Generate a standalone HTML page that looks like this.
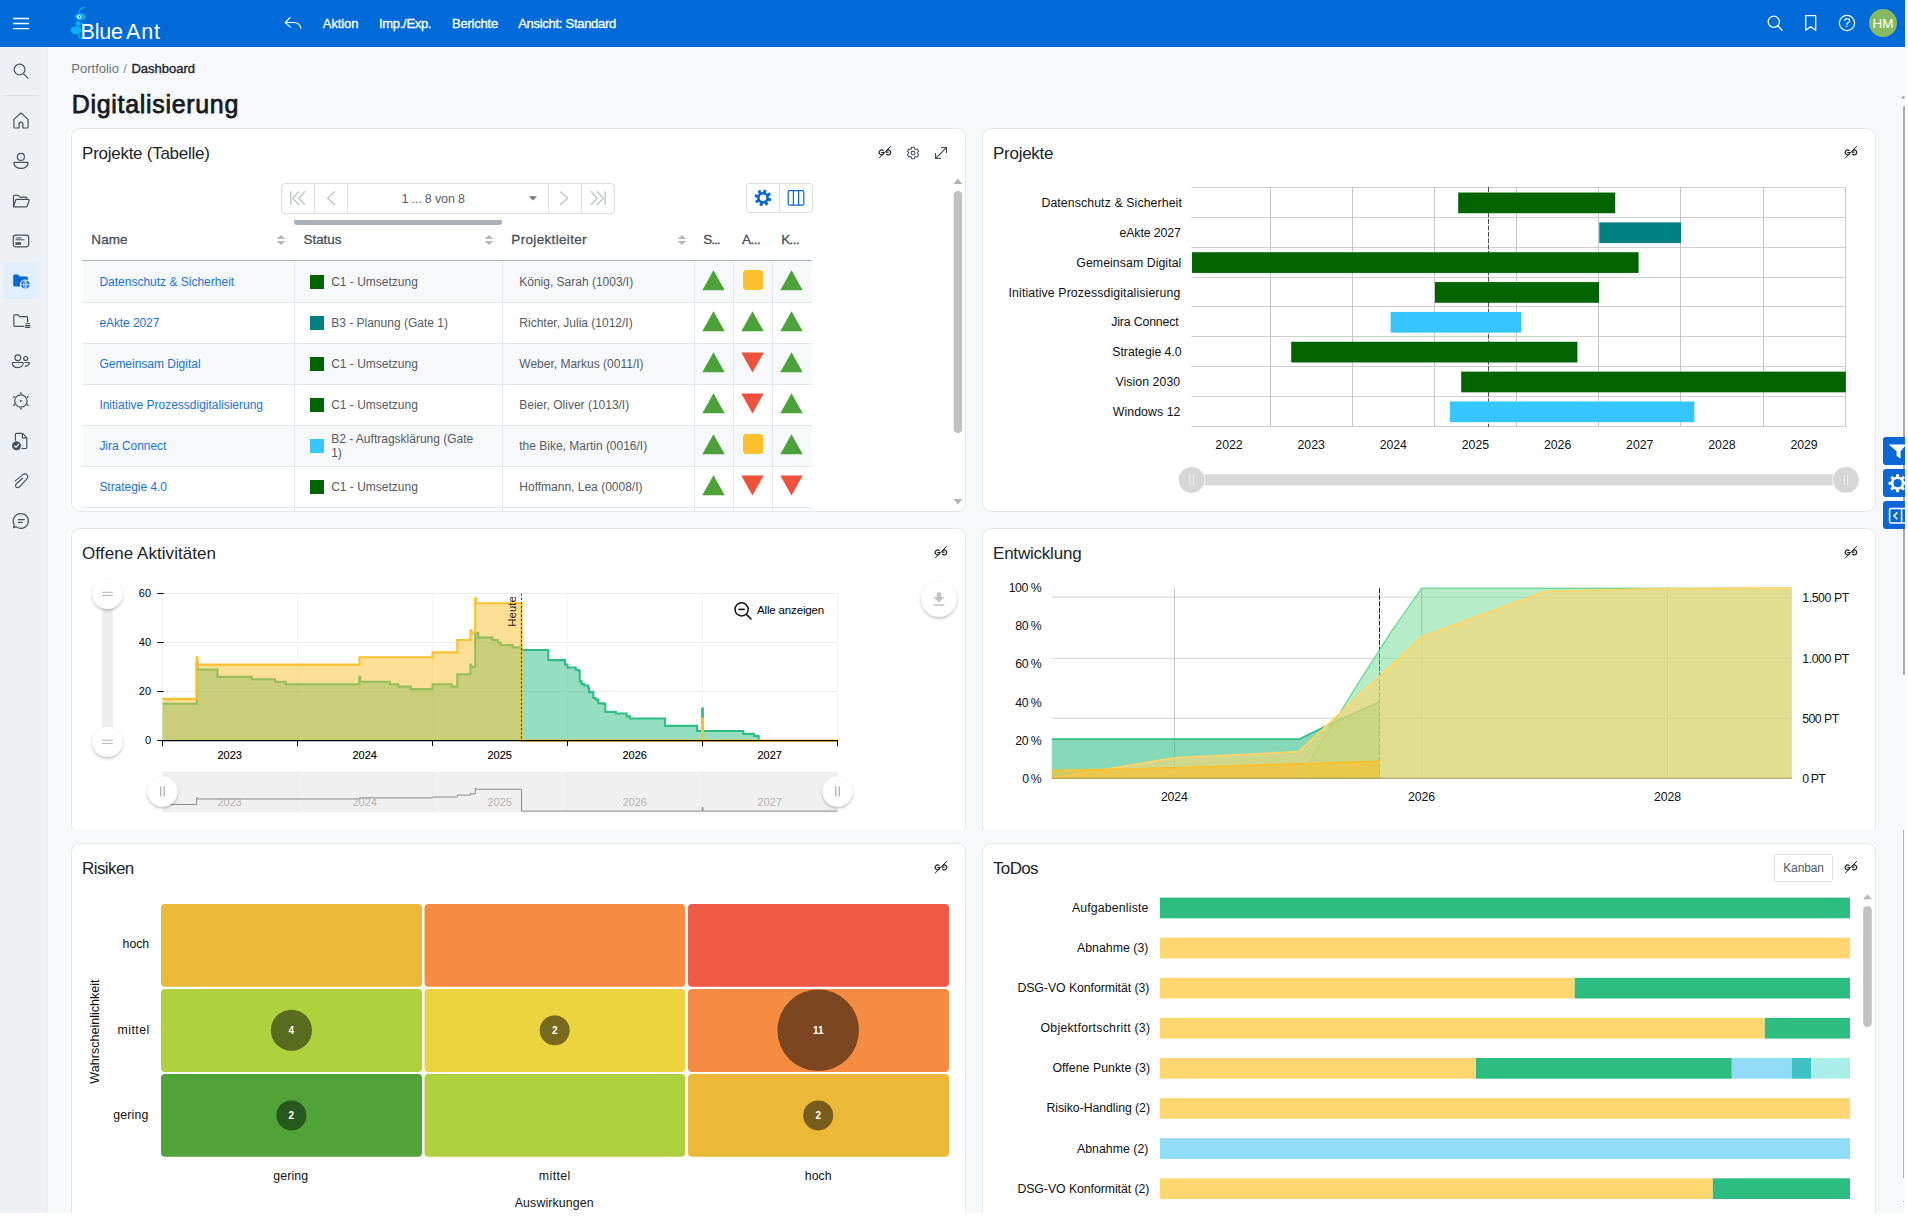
<!DOCTYPE html>
<html lang="de"><head><meta charset="utf-8"><title>Digitalisierung – Dashboard</title>
<style>
*{box-sizing:border-box}
html,body{margin:0;padding:0}
body{width:1908px;height:1216px;overflow:hidden;background:#fff;font-family:"Liberation Sans",sans-serif;color:#212529;position:relative}
#app{position:absolute;left:0;top:0;width:1905px;height:1213px;background:#f6f8fa;overflow:hidden}
.t{position:absolute;white-space:pre;display:block}
.abs{position:absolute}
header{position:absolute;left:0;top:0;width:1905px;height:47px;background:#006ad8}
nav.side{position:absolute;left:0;top:47px;width:48px;height:1166px;background:#eef1f3;border-right:1px solid #e9ecef}
.panel{position:absolute;background:#fff;border:1px solid #e3e7eb;border-radius:9px}
svg{position:absolute;overflow:visible}
.ico{fill:none;stroke:#495057;stroke-width:1.18;stroke-linecap:round;stroke-linejoin:round}
</style></head><body><div id="app">
<header><svg style="left:0;top:0" width="48" height="47"><g stroke="#fff" stroke-width="1.3" stroke-linecap="round"><path d="M13.5 18.5H28.5M13.5 23.5H28.5M13.5 28.7H28.5"/></g></svg><svg style="left:68px;top:4px" width="30" height="40" viewBox="0 0 30 40">
<path d="M11.2 8.2 C11.4 5.2 13.4 3.6 16.6 3.4" fill="none" stroke="#05b2f6" stroke-width="1.1" stroke-linecap="round"/>
<ellipse cx="12.1" cy="12.7" rx="5.3" ry="3.6" fill="#05b2f6"/>
<circle cx="11.2" cy="12.8" r="1.9" fill="#fff"/><circle cx="11.5" cy="12.9" r="0.85" fill="#0a63c9"/>
<circle cx="10.2" cy="19.6" r="2.5" fill="#05b2f6"/>
<ellipse cx="8" cy="26.2" rx="5.3" ry="4" fill="#05b2f6"/>
<path d="M10.4 30.4 C10.4 33.4 11.6 34 13.6 34 M13.6 19.8 L15.2 20" stroke="#05b2f6" stroke-width="1.3" stroke-linecap="round" fill="none"/>
</svg><span class="t" style="left:80.60px;top:22.00px;font-size:21.5px;line-height:21.5px;color:#fff;letter-spacing:-0.216px;">Blue</span><span class="t" style="left:126.00px;top:22.00px;font-size:21.5px;line-height:21.5px;color:#fff;letter-spacing:0.859px;">Ant</span><svg style="left:280px;top:12px" width="26" height="22"><path d="M6 10.5 H13 C18.5 10.5 20.5 13.5 20.8 16.5 M10.3 5.3 L5.3 10.5 L10.3 15.2" fill="none" stroke="#fff" stroke-width="1.1" stroke-linecap="round" stroke-linejoin="round"/></svg><span class="t" style="left:322.80px;top:17.00px;font-size:13px;line-height:13px;color:#fff;letter-spacing:-0.088px;-webkit-text-stroke:0.3px #fff;">Aktion</span><span class="t" style="left:379.00px;top:17.00px;font-size:13px;line-height:13px;color:#fff;letter-spacing:-0.303px;-webkit-text-stroke:0.3px #fff;">Imp./Exp.</span><span class="t" style="left:452.00px;top:17.00px;font-size:13px;line-height:13px;color:#fff;letter-spacing:-0.215px;-webkit-text-stroke:0.3px #fff;">Berichte</span><span class="t" style="left:518.20px;top:17.00px;font-size:13px;line-height:13px;color:#fff;letter-spacing:-0.283px;-webkit-text-stroke:0.3px #fff;">Ansicht: Standard</span><svg style="left:1764px;top:12px" width="24" height="24"><circle cx="9.8" cy="9.8" r="5.6" fill="none" stroke="#fff" stroke-width="1.3"/><path d="M14 14 L18 18.2" stroke="#fff" stroke-width="1.3" stroke-linecap="round"/></svg><svg style="left:1800px;top:12px" width="24" height="24"><path d="M5.7 3.7 H15.7 V18.3 L10.7 14.7 L5.7 18.3 Z" fill="none" stroke="#fff" stroke-width="1.3" stroke-linejoin="round"/></svg><svg style="left:1835px;top:11px" width="24" height="24"><circle cx="12" cy="12" r="7.6" fill="none" stroke="#fff" stroke-width="1.2"/></svg><span class="t" style="left:1843.52px;top:17.00px;font-size:12.5px;line-height:12.5px;color:#fff;">?</span><div class="abs" style="left:1869px;top:9px;width:28px;height:28px;border-radius:50%;background:#86b960"></div><span class="t" style="left:1872.50px;top:17.00px;font-size:13.5px;line-height:13.5px;color:#fff;">HM</span></header><div class="abs" style="left:48px;top:47px;width:1857px;height:1px;background:#fdfdfe"></div><nav class="side"><div class="abs" style="left:3px;top:48px;width:36px;height:1px;background:#dfe3e7"></div><div class="abs" style="left:3px;top:216px;width:36px;height:36px;border-radius:3px;background:#e1eefb"></div><svg style="left:9px;top:12px" width="24" height="24" viewBox="0 0 24 24" class="ico" ><circle cx="10.6" cy="10.6" r="5.4"/><path d="M14.6 14.8 L19 19.2"/></svg><svg style="left:9px;top:62px" width="24" height="24" viewBox="0 0 24 24" class="ico" ><path d="M4.9 10.4 L12 4 L19.1 10.4 V18 Q19.1 19 18.1 19 H13.9 V15.2 Q13.9 13.2 12 13.2 Q10.1 13.2 10.1 15.2 V19 H5.9 Q4.9 19 4.9 18 Z"/></svg><svg style="left:9px;top:102px" width="24" height="24" viewBox="0 0 24 24" class="ico" ><circle cx="11.9" cy="7.9" r="3.5"/><path d="M5.6 13.3 H18.4 Q19.2 13.3 19.1 14.1 Q18.3 19.4 12 19.4 Q5.7 19.4 4.9 14.1 Q4.8 13.3 5.6 13.3 Z"/></svg><svg style="left:9px;top:142px" width="24" height="24" viewBox="0 0 24 24" class="ico" ><path d="M4.5 17.8 V7.3 Q4.5 6.3 5.5 6.3 H9.2 L11 8.2 H16.8 Q17.8 8.2 17.8 9.2 V10.4 M4.5 17.8 L6.6 11.3 Q6.9 10.4 7.9 10.4 H19.3 Q20.5 10.4 20.1 11.5 L18.3 17 Q18 17.8 17 17.8 Z"/></svg><svg style="left:9px;top:182px" width="24" height="24" viewBox="0 0 24 24" class="ico" ><rect x="4.3" y="6.2" width="15.4" height="11.6" rx="2.2"/><path d="M7 9 H12 M7 10.8 H15" stroke-width="1"/><rect x="6.4" y="13.2" width="5.6" height="2.6" fill="#495057" stroke="none"/></svg><svg style="left:9px;top:222px" width="24" height="24" viewBox="0 0 24 24"><path d="M4.2 7 Q4.2 5.6 5.6 5.6 H9 L10.8 7.4 H17.4 Q18.8 7.4 18.8 8.8 V11.2 A5.3 5.3 0 0 0 11.2 17.6 H5.6 Q4.2 17.6 4.2 16.2 Z" fill="#0a67d3"/><circle cx="16.3" cy="15.6" r="4.1" fill="#0a67d3"/><g fill="none" stroke="#e1eefb" stroke-width="0.8"><ellipse cx="16.3" cy="15.6" rx="1.7" ry="4.1"/><path d="M12.2 15.6 H20.4 M16.3 11.5 V19.7"/></g></svg><svg style="left:9px;top:262px" width="24" height="24" viewBox="0 0 24 24" class="ico" ><path d="M15 17.3 H5.8 Q4.8 17.3 4.8 16.3 V6.8 Q4.8 5.8 5.8 5.8 H9 L10.8 7.7 H17.6 Q18.6 7.7 18.6 8.7 V13"/><path d="M16.6 14.8 H20.8 M16.6 16.6 H20.8 M16.6 18.4 H20.8" stroke-width="1.1"/></svg><svg style="left:9px;top:302px" width="24" height="24" viewBox="0 0 24 24" class="ico" ><circle cx="8.8" cy="8.8" r="2.9"/><path d="M4 13.5 H13.5 Q14.3 13.5 14.2 14.3 Q13.6 18.6 8.8 18.6 Q3.9 18.6 3.3 14.3 Q3.2 13.5 4 13.5 Z"/><circle cx="16.7" cy="9.5" r="2"/><path d="M16 13.5 H19.6 Q20.5 13.5 20.3 14.4 Q19.7 16.9 16.2 17.3"/></svg><svg style="left:9px;top:342px" width="24" height="24" viewBox="0 0 24 24" class="ico" ><circle cx="11.9" cy="12" r="6.2"/><circle cx="11.9" cy="12" r="1.1" fill="#495057" stroke="none"/><path d="M13.10 4.70 L11.90 2.70 L10.70 4.70 Z M18.82 9.39 L19.95 7.35 L17.62 7.31 Z M17.62 16.69 L19.95 16.65 L18.82 14.61 Z M10.70 19.30 L11.90 21.30 L13.10 19.30 Z M4.98 14.61 L3.85 16.65 L6.18 16.69 Z M6.18 7.31 L3.85 7.35 L4.98 9.39 Z " fill="#495057" stroke="none"/></svg><svg style="left:9px;top:382px" width="24" height="24" viewBox="0 0 24 24" class="ico" ><path d="M6.4 11.3 V5.4 Q6.4 4.4 7.4 4.4 H13.6 L17.8 8.6 V18.5 Q17.8 19.5 16.8 19.5 H12.8 M13.4 4.6 V8.8 H17.6"/><circle cx="7.5" cy="16.7" r="4.5" fill="#495057" stroke="none"/><path d="M5.5 16.8 L7 18.3 L9.6 15.3" stroke="#eef1f3" stroke-width="1.2"/></svg><svg style="left:9px;top:422px" width="24" height="24" viewBox="0 0 24 24" class="ico" ><path d="M6.2 11.9 L13.6 5.9 C15.4 4.4 17.5 4.6 18.4 6.2 C19.2 7.6 18.8 8.9 17.9 9.9 L10.7 17.7 C9.4 19.1 7.3 19 6.7 17.4 C6.3 16.4 6.6 15.5 7.4 14.7 L13.6 9.3"/></svg><svg style="left:9px;top:462px" width="24" height="24" viewBox="0 0 24 24" class="ico" ><path d="M12.2 4.6 A7.4 7.4 0 1 1 7.2 17.6 L4.4 18.8 L5.3 15.6 A7.4 7.4 0 0 1 12.2 4.6 Z"/><path d="M9.3 10.6 H15.3 M9.3 13.4 H13.2"/></svg></nav><span class="t" style="left:71.30px;top:62.00px;font-size:13px;line-height:13px;color:#6c757d;">Portfolio</span><span class="t" style="left:123.30px;top:62.00px;font-size:13px;line-height:13px;color:#868e96;">/</span><span class="t" style="left:131.50px;top:62.00px;font-size:13px;line-height:13px;color:#212529;letter-spacing:-0.014px;-webkit-text-stroke:0.35px #212529;">Dashboard</span><span class="t" style="left:71.80px;top:92.00px;font-size:25px;line-height:25px;color:#161a1e;letter-spacing:0.676px;-webkit-text-stroke:0.75px #161a1e;">Digitalisierung</span><section class="panel" style="left:71px;top:128px;width:895px;height:384px"></section><section class="panel" style="left:982px;top:128px;width:894px;height:384px"></section><div class="abs" style="left:60px;top:520px;width:1830px;height:310px;overflow:hidden"><section class="panel" style="left:11px;top:8px;width:895px;height:306px"></section><section class="panel" style="left:922px;top:8px;width:894px;height:306px"></section></div><section class="panel" style="left:71px;top:843px;width:895px;height:380px"></section><section class="panel" style="left:982px;top:843px;width:894px;height:380px"></section><span class="t" style="left:82.10px;top:145.00px;font-size:17px;line-height:17px;color:#212529;letter-spacing:-0.269px;">Projekte (Tabelle)</span><span class="t" style="left:993.00px;top:145.00px;font-size:17px;line-height:17px;color:#212529;letter-spacing:-0.268px;">Projekte</span><span class="t" style="left:82.10px;top:545.00px;font-size:17px;line-height:17px;color:#212529;letter-spacing:0.057px;">Offene Aktivitäten</span><span class="t" style="left:993.00px;top:545.00px;font-size:17px;line-height:17px;color:#212529;letter-spacing:-0.212px;">Entwicklung</span><span class="t" style="left:82.10px;top:860.00px;font-size:17px;line-height:17px;color:#212529;letter-spacing:-0.608px;">Risiken</span><span class="t" style="left:993.00px;top:860.00px;font-size:17px;line-height:17px;color:#212529;letter-spacing:-0.647px;">ToDos</span><svg style="left:877px;top:144.29999999999998px" width="16" height="17" viewBox="0 0 16 17" fill="none" stroke="#1d2329" stroke-width="1.15" stroke-linecap="round"><path d="M6.2 6.6 A2.4 2.4 0 1 0 6.3 10.1 M4.7 8.6 H6.9"/><path d="M9.7 10.2 A2.4 2.4 0 1 0 9.6 6.7 M9.2 8.1 H11.2"/><path d="M2.2 14.1 L13.6 2.4" stroke-width="1"/></svg><svg style="left:1843px;top:144.29999999999998px" width="16" height="17" viewBox="0 0 16 17" fill="none" stroke="#1d2329" stroke-width="1.15" stroke-linecap="round"><path d="M6.2 6.6 A2.4 2.4 0 1 0 6.3 10.1 M4.7 8.6 H6.9"/><path d="M9.7 10.2 A2.4 2.4 0 1 0 9.6 6.7 M9.2 8.1 H11.2"/><path d="M2.2 14.1 L13.6 2.4" stroke-width="1"/></svg><svg style="left:933px;top:544.3000000000001px" width="16" height="17" viewBox="0 0 16 17" fill="none" stroke="#1d2329" stroke-width="1.15" stroke-linecap="round"><path d="M6.2 6.6 A2.4 2.4 0 1 0 6.3 10.1 M4.7 8.6 H6.9"/><path d="M9.7 10.2 A2.4 2.4 0 1 0 9.6 6.7 M9.2 8.1 H11.2"/><path d="M2.2 14.1 L13.6 2.4" stroke-width="1"/></svg><svg style="left:1843px;top:544.3000000000001px" width="16" height="17" viewBox="0 0 16 17" fill="none" stroke="#1d2329" stroke-width="1.15" stroke-linecap="round"><path d="M6.2 6.6 A2.4 2.4 0 1 0 6.3 10.1 M4.7 8.6 H6.9"/><path d="M9.7 10.2 A2.4 2.4 0 1 0 9.6 6.7 M9.2 8.1 H11.2"/><path d="M2.2 14.1 L13.6 2.4" stroke-width="1"/></svg><svg style="left:933px;top:859.1px" width="16" height="17" viewBox="0 0 16 17" fill="none" stroke="#1d2329" stroke-width="1.15" stroke-linecap="round"><path d="M6.2 6.6 A2.4 2.4 0 1 0 6.3 10.1 M4.7 8.6 H6.9"/><path d="M9.7 10.2 A2.4 2.4 0 1 0 9.6 6.7 M9.2 8.1 H11.2"/><path d="M2.2 14.1 L13.6 2.4" stroke-width="1"/></svg><svg style="left:1843px;top:859.1px" width="16" height="17" viewBox="0 0 16 17" fill="none" stroke="#1d2329" stroke-width="1.15" stroke-linecap="round"><path d="M6.2 6.6 A2.4 2.4 0 1 0 6.3 10.1 M4.7 8.6 H6.9"/><path d="M9.7 10.2 A2.4 2.4 0 1 0 9.6 6.7 M9.2 8.1 H11.2"/><path d="M2.2 14.1 L13.6 2.4" stroke-width="1"/></svg><svg style="left:905px;top:144.9px" width="16" height="16" viewBox="0 0 16 16" fill="none" stroke="#46525d" stroke-width="1.05" stroke-linejoin="round"><circle cx="8" cy="8" r="1.9"/><path d="M6.39 3.91 L6.60 2.27 L9.40 2.27 L9.61 3.91 L10.74 4.56 L12.26 3.92 L13.66 6.35 L12.35 7.35 L12.35 8.65 L13.66 9.65 L12.26 12.08 L10.74 11.44 L9.61 12.09 L9.40 13.73 L6.60 13.73 L6.39 12.09 L5.26 11.44 L3.74 12.08 L2.34 9.65 L3.65 8.65 L3.65 7.35 L2.34 6.35 L3.74 3.92 L5.26 4.56 Z"/></svg><svg style="left:933px;top:145px" width="16" height="16" viewBox="0 0 16 16" fill="none" stroke="#3b4a57" stroke-width="1.15" stroke-linecap="square" stroke-linejoin="miter"><path d="M2.6 13.4 L13.4 2.6 M8.6 2.5 H13.5 V7.4 M2.5 8.6 V13.5 H7.4"/></svg><div class="abs" style="left:281px;top:183px;width:334px;height:31px;border:1px solid #dcdfe3;border-radius:4px;background:#fff"></div><div class="abs" style="left:314px;top:184px;width:1px;height:29px;background:#dcdfe3"></div><div class="abs" style="left:347px;top:184px;width:1px;height:29px;background:#dcdfe3"></div><div class="abs" style="left:548px;top:184px;width:1px;height:29px;background:#dcdfe3"></div><div class="abs" style="left:581px;top:184px;width:1px;height:29px;background:#dcdfe3"></div><svg style="left:281px;top:183px" width="334" height="31" fill="none" stroke="#c3c8cd" stroke-width="1.5" stroke-linecap="round" stroke-linejoin="round"><path d="M9.8 8.8 V21.6 M17.6 8.8 L11.8 15.2 L17.6 21.6 M23.6 8.8 L17.8 15.2 L23.6 21.6"/><path d="M53.6 8.8 L46.6 15.2 L53.6 21.6"/><path d="M279.6 8.8 L286.6 15.2 L279.6 21.6"/><path d="M324.2 8.8 V21.6 M316.4 8.8 L322.2 15.2 L316.4 21.6 M310.4 8.8 L316.2 15.2 L310.4 21.6"/><path d="M248 13.2 H256 L252 17.4 Z" fill="#777c82" stroke="none"/></svg><span class="t" style="left:401.40px;top:193.00px;font-size:12.5px;line-height:12.5px;color:#5a6068;letter-spacing:-0.144px;">1 ... 8 von 8</span><div class="abs" style="left:746px;top:183px;width:67px;height:30px;border:1px solid #dcdfe3;border-radius:3px;background:#fff"></div><div class="abs" style="left:779px;top:184px;width:1px;height:28px;background:#dcdfe3"></div><svg style="left:753px;top:188px" width="20" height="20" viewBox="0 0 20 20"><g transform="translate(10 9.8)"><circle r="4.6" fill="none" stroke="#0a67d3" stroke-width="2.6"/><g fill="#0a67d3"><rect x="-1.5" y="-8.3" width="3" height="3.4" transform="rotate(15)"/><rect x="-1.5" y="-8.3" width="3" height="3.4" transform="rotate(60)"/><rect x="-1.5" y="-8.3" width="3" height="3.4" transform="rotate(105)"/><rect x="-1.5" y="-8.3" width="3" height="3.4" transform="rotate(150)"/><rect x="-1.5" y="-8.3" width="3" height="3.4" transform="rotate(195)"/><rect x="-1.5" y="-8.3" width="3" height="3.4" transform="rotate(240)"/><rect x="-1.5" y="-8.3" width="3" height="3.4" transform="rotate(285)"/><rect x="-1.5" y="-8.3" width="3" height="3.4" transform="rotate(330)"/></g><circle r="2.2" fill="#fff"/></g></svg><svg style="left:786px;top:188px" width="20" height="20" viewBox="0 0 20 20" fill="none" stroke="#0a67d3" stroke-width="1.2"><rect x="2.2" y="2.6" width="15.6" height="14.6" rx="1.2"/><path d="M7.4 2.6 V17.2 M12.6 2.6 V17.2"/></svg><div class="abs" style="left:294px;top:220px;width:208px;height:5px;background:#aab3bb;border-radius:0 0 3px 3px"></div><div class="abs" style="left:82px;top:260px;width:730px;height:1px;background:#aeb6be"></div><div class="abs" style="left:82px;top:261px;width:730px;height:42px;background:#f6f8fa;border-bottom:1px solid #e4e8ec"></div><div class="abs" style="left:82px;top:303px;width:730px;height:41px;background:#fff;border-bottom:1px solid #e4e8ec"></div><div class="abs" style="left:82px;top:344px;width:730px;height:41px;background:#f6f8fa;border-bottom:1px solid #e4e8ec"></div><div class="abs" style="left:82px;top:385px;width:730px;height:41px;background:#fff;border-bottom:1px solid #e4e8ec"></div><div class="abs" style="left:82px;top:426px;width:730px;height:41px;background:#f6f8fa;border-bottom:1px solid #e4e8ec"></div><div class="abs" style="left:82px;top:467px;width:730px;height:41px;background:#fff;border-bottom:1px solid #e4e8ec"></div><div class="abs" style="left:294px;top:262px;width:1px;height:249px;background:#e4e8ec"></div><div class="abs" style="left:502px;top:262px;width:1px;height:249px;background:#e4e8ec"></div><div class="abs" style="left:694px;top:262px;width:1px;height:249px;background:#e4e8ec"></div><div class="abs" style="left:733px;top:262px;width:1px;height:249px;background:#e4e8ec"></div><div class="abs" style="left:772px;top:262px;width:1px;height:249px;background:#e4e8ec"></div><span class="t" style="left:91.30px;top:233.00px;font-size:13.5px;line-height:13.5px;color:#495057;letter-spacing:0.095px;-webkit-text-stroke:0.3px #495057;">Name</span><span class="t" style="left:303.50px;top:233.00px;font-size:13.5px;line-height:13.5px;color:#495057;letter-spacing:-0.056px;-webkit-text-stroke:0.3px #495057;">Status</span><span class="t" style="left:511.30px;top:233.00px;font-size:13.5px;line-height:13.5px;color:#495057;letter-spacing:0.335px;-webkit-text-stroke:0.3px #495057;">Projektleiter</span><span class="t" style="left:703.30px;top:233.00px;font-size:13.5px;line-height:13.5px;color:#495057;letter-spacing:-1.022px;-webkit-text-stroke:0.3px #495057;">S...</span><span class="t" style="left:742.00px;top:233.00px;font-size:13.5px;line-height:13.5px;color:#495057;letter-spacing:-0.522px;-webkit-text-stroke:0.3px #495057;">A...</span><span class="t" style="left:781.30px;top:233.00px;font-size:13.5px;line-height:13.5px;color:#495057;letter-spacing:-0.689px;-webkit-text-stroke:0.3px #495057;">K...</span><svg style="left:276.4px;top:233.5px" width="10" height="12"><path d="M0.6 5 L5 1 L9.4 5 Z M0.6 7 L5 11 L9.4 7 Z" fill="#b4b8bc"/></svg><svg style="left:484.4px;top:233.5px" width="10" height="12"><path d="M0.6 5 L5 1 L9.4 5 Z M0.6 7 L5 11 L9.4 7 Z" fill="#b4b8bc"/></svg><svg style="left:676.6px;top:233.5px" width="10" height="12"><path d="M0.6 5 L5 1 L9.4 5 Z M0.6 7 L5 11 L9.4 7 Z" fill="#b4b8bc"/></svg><span class="t" style="left:99.40px;top:276.00px;font-size:12px;line-height:12px;color:#1a73d8;">Datenschutz &amp; Sicherheit</span><div class="abs" style="left:310px;top:275px;width:14px;height:14px;background:#006400"></div><span class="t" style="left:331.20px;top:276.00px;font-size:12px;line-height:12px;color:#555b62;">C1 - Umsetzung</span><span class="t" style="left:519.30px;top:276.00px;font-size:12px;line-height:12px;color:#555b62;letter-spacing:-0.009px;">König, Sarah (1003/I)</span><svg style="left:702.3px;top:270.0px" width="23" height="21"><path d="M11.5 0.2 L22.7 20.3 H0.3 Z" fill="#4aa238"/></svg><div class="abs" style="left:742.8px;top:270.0px;width:20px;height:20px;border-radius:3.5px;background:#fbc02d"></div><svg style="left:780.3px;top:270.0px" width="23" height="21"><path d="M11.5 0.2 L22.7 20.3 H0.3 Z" fill="#4aa238"/></svg><span class="t" style="left:99.40px;top:317.00px;font-size:12px;line-height:12px;color:#1a73d8;letter-spacing:-0.080px;">eAkte 2027</span><div class="abs" style="left:310px;top:316px;width:14px;height:14px;background:#008080"></div><span class="t" style="left:331.20px;top:317.00px;font-size:12px;line-height:12px;color:#555b62;">B3 - Planung (Gate 1)</span><span class="t" style="left:519.30px;top:317.00px;font-size:12px;line-height:12px;color:#555b62;">Richter, Julia (1012/I)</span><svg style="left:702.3px;top:311.0px" width="23" height="21"><path d="M11.5 0.2 L22.7 20.3 H0.3 Z" fill="#4aa238"/></svg><svg style="left:741.3px;top:311.0px" width="23" height="21"><path d="M11.5 0.2 L22.7 20.3 H0.3 Z" fill="#4aa238"/></svg><svg style="left:780.3px;top:311.0px" width="23" height="21"><path d="M11.5 0.2 L22.7 20.3 H0.3 Z" fill="#4aa238"/></svg><span class="t" style="left:99.40px;top:358.00px;font-size:12px;line-height:12px;color:#1a73d8;letter-spacing:-0.011px;">Gemeinsam Digital</span><div class="abs" style="left:310px;top:357px;width:14px;height:14px;background:#006400"></div><span class="t" style="left:331.20px;top:358.00px;font-size:12px;line-height:12px;color:#555b62;">C1 - Umsetzung</span><span class="t" style="left:519.30px;top:358.00px;font-size:12px;line-height:12px;color:#555b62;">Weber, Markus (0011/I)</span><svg style="left:702.3px;top:352.0px" width="23" height="21"><path d="M11.5 0.2 L22.7 20.3 H0.3 Z" fill="#4aa238"/></svg><svg style="left:741.3px;top:351.5px" width="23" height="21"><path d="M11.5 20.6 L22.7 0.5 H0.3 Z" fill="#f0513c"/></svg><svg style="left:780.3px;top:352.0px" width="23" height="21"><path d="M11.5 0.2 L22.7 20.3 H0.3 Z" fill="#4aa238"/></svg><span class="t" style="left:99.40px;top:399.00px;font-size:12px;line-height:12px;color:#1a73d8;letter-spacing:-0.015px;">Initiative Prozessdigitalisierung</span><div class="abs" style="left:310px;top:398px;width:14px;height:14px;background:#006400"></div><span class="t" style="left:331.20px;top:399.00px;font-size:12px;line-height:12px;color:#555b62;">C1 - Umsetzung</span><span class="t" style="left:519.30px;top:399.00px;font-size:12px;line-height:12px;color:#555b62;letter-spacing:-0.007px;">Beier, Oliver (1013/I)</span><svg style="left:702.3px;top:393.0px" width="23" height="21"><path d="M11.5 0.2 L22.7 20.3 H0.3 Z" fill="#4aa238"/></svg><svg style="left:741.3px;top:392.5px" width="23" height="21"><path d="M11.5 20.6 L22.7 0.5 H0.3 Z" fill="#f0513c"/></svg><svg style="left:780.3px;top:393.0px" width="23" height="21"><path d="M11.5 0.2 L22.7 20.3 H0.3 Z" fill="#4aa238"/></svg><span class="t" style="left:99.40px;top:440.00px;font-size:12px;line-height:12px;color:#1a73d8;letter-spacing:-0.034px;">Jira Connect</span><div class="abs" style="left:310px;top:439px;width:14px;height:14px;background:#38c6ff"></div><span class="t" style="left:331.20px;top:433.00px;font-size:12px;line-height:12px;color:#555b62;">B2 - Auftragsklärung (Gate</span><span class="t" style="left:331.20px;top:447.00px;font-size:12px;line-height:12px;color:#555b62;">1)</span><span class="t" style="left:519.30px;top:440.00px;font-size:12px;line-height:12px;color:#555b62;letter-spacing:-0.007px;">the Bike, Martin (0016/I)</span><svg style="left:702.3px;top:434.0px" width="23" height="21"><path d="M11.5 0.2 L22.7 20.3 H0.3 Z" fill="#4aa238"/></svg><div class="abs" style="left:742.8px;top:434.0px;width:20px;height:20px;border-radius:3.5px;background:#fbc02d"></div><svg style="left:780.3px;top:434.0px" width="23" height="21"><path d="M11.5 0.2 L22.7 20.3 H0.3 Z" fill="#4aa238"/></svg><span class="t" style="left:99.40px;top:481.00px;font-size:12px;line-height:12px;color:#1a73d8;letter-spacing:-0.037px;">Strategie 4.0</span><div class="abs" style="left:310px;top:480px;width:14px;height:14px;background:#006400"></div><span class="t" style="left:331.20px;top:481.00px;font-size:12px;line-height:12px;color:#555b62;">C1 - Umsetzung</span><span class="t" style="left:519.30px;top:481.00px;font-size:12px;line-height:12px;color:#555b62;">Hoffmann, Lea (0008/I)</span><svg style="left:702.3px;top:475.0px" width="23" height="21"><path d="M11.5 0.2 L22.7 20.3 H0.3 Z" fill="#4aa238"/></svg><svg style="left:741.3px;top:474.5px" width="23" height="21"><path d="M11.5 20.6 L22.7 0.5 H0.3 Z" fill="#f0513c"/></svg><svg style="left:780.3px;top:474.5px" width="23" height="21"><path d="M11.5 20.6 L22.7 0.5 H0.3 Z" fill="#f0513c"/></svg><div class="abs" style="left:82px;top:508px;width:731px;height:3px;background:#fff"></div><div class="abs" style="left:294px;top:508px;width:1px;height:3px;background:#e4e8ec"></div><div class="abs" style="left:502px;top:508px;width:1px;height:3px;background:#e4e8ec"></div><div class="abs" style="left:694px;top:508px;width:1px;height:3px;background:#e4e8ec"></div><div class="abs" style="left:733px;top:508px;width:1px;height:3px;background:#e4e8ec"></div><div class="abs" style="left:772px;top:508px;width:1px;height:3px;background:#e4e8ec"></div><svg style="left:950.6px;top:176px" width="14" height="332"><path d="M2.4 8 L6.9 2.8 L11.4 8 Z M2.4 323 L6.9 328.4 L11.4 323 Z" fill="#b4b4b4"/><rect x="2.6" y="15" width="8.6" height="242" rx="4.3" fill="#c1c1c1"/></svg><svg style="left:0;top:0" width="1908" height="520"><path d="M1191.3 187.5 H1846.0" stroke="#cfcfcf" stroke-width="1"/><path d="M1191.3 217.5 H1846.0" stroke="#cfcfcf" stroke-width="1"/><path d="M1191.3 247.5 H1846.0" stroke="#cfcfcf" stroke-width="1"/><path d="M1191.3 277.5 H1846.0" stroke="#cfcfcf" stroke-width="1"/><path d="M1191.3 306.5 H1846.0" stroke="#cfcfcf" stroke-width="1"/><path d="M1191.3 336.5 H1846.0" stroke="#cfcfcf" stroke-width="1"/><path d="M1191.3 366.5 H1846.0" stroke="#cfcfcf" stroke-width="1"/><path d="M1191.3 396.5 H1846.0" stroke="#cfcfcf" stroke-width="1"/><path d="M1191.3 426.5 H1846.0" stroke="#cfcfcf" stroke-width="1"/><path d="M1270.5 187 V427" stroke="#c6c6c6" stroke-width="1"/><path d="M1352.5 187 V427" stroke="#c6c6c6" stroke-width="1"/><path d="M1434.5 187 V427" stroke="#c6c6c6" stroke-width="1"/><path d="M1516.5 187 V427" stroke="#c6c6c6" stroke-width="1"/><path d="M1598.5 187 V427" stroke="#c6c6c6" stroke-width="1"/><path d="M1680.5 187 V427" stroke="#c6c6c6" stroke-width="1"/><path d="M1763.5 187 V427" stroke="#c6c6c6" stroke-width="1"/><path d="M1845.5 187 V427" stroke="#c6c6c6" stroke-width="1"/><path d="M1488.5 187 V427" stroke="#3a3a3a" stroke-width="0.9" stroke-dasharray="5 1.4"/><rect x="1458.2" y="192.53" width="157.00" height="20.7" fill="#006400"/><rect x="1599.3" y="222.38" width="81.70" height="20.7" fill="#008080"/><rect x="1192" y="252.22" width="446.60" height="20.7" fill="#006400"/><rect x="1435" y="282.07" width="164.00" height="20.7" fill="#006400"/><rect x="1390.6" y="311.93" width="130.70" height="20.7" fill="#35c5ff"/><rect x="1291.2" y="341.77" width="286.20" height="20.7" fill="#006400"/><rect x="1461.2" y="371.62" width="384.60" height="20.7" fill="#006400"/><rect x="1450" y="401.47" width="244.40" height="20.7" fill="#35c5ff"/><rect x="1191" y="474.2" width="655" height="11.4" rx="5.7" fill="#d9d9d9"/><circle cx="1191.6" cy="479.9" r="13.4" fill="#d6d6d6" stroke="#fff" stroke-width="0.8"/><path d="M1189.8 475 V484.8 M1193.3999999999999 475 V484.8" stroke="#f1f1f1" stroke-width="1"/><circle cx="1845.9" cy="479.9" r="13.4" fill="#d6d6d6" stroke="#fff" stroke-width="0.8"/><path d="M1844.1000000000001 475 V484.8 M1847.7 475 V484.8" stroke="#f1f1f1" stroke-width="1"/></svg><span class="t" style="left:1041.40px;top:197.00px;font-size:12.3px;line-height:12.3px;color:#111;letter-spacing:0.105px;">Datenschutz &amp; Sicherheit</span><span class="t" style="left:1119.50px;top:227.00px;font-size:12.3px;line-height:12.3px;color:#111;letter-spacing:-0.102px;">eAkte 2027</span><span class="t" style="left:1076.30px;top:257.00px;font-size:12.3px;line-height:12.3px;color:#111;letter-spacing:0.069px;">Gemeinsam Digital</span><span class="t" style="left:1008.60px;top:287.00px;font-size:12.3px;line-height:12.3px;color:#111;letter-spacing:0.111px;">Initiative Prozessdigitalisierung</span><span class="t" style="left:1111.30px;top:316.00px;font-size:12.3px;line-height:12.3px;color:#111;letter-spacing:-0.159px;">Jira Connect</span><span class="t" style="left:1112.30px;top:346.00px;font-size:12.3px;line-height:12.3px;color:#111;letter-spacing:-0.036px;">Strategie 4.0</span><span class="t" style="left:1115.40px;top:376.00px;font-size:12.3px;line-height:12.3px;color:#111;letter-spacing:0.075px;">Vision 2030</span><span class="t" style="left:1112.80px;top:406.00px;font-size:12.3px;line-height:12.3px;color:#111;letter-spacing:0.068px;">Windows 12</span><span class="t" style="left:1215.35px;top:439.00px;font-size:12.3px;line-height:12.3px;color:#111;letter-spacing:-0.020px;">2022</span><span class="t" style="left:1297.50px;top:439.00px;font-size:12.3px;line-height:12.3px;color:#111;letter-spacing:-0.020px;">2023</span><span class="t" style="left:1379.65px;top:439.00px;font-size:12.3px;line-height:12.3px;color:#111;letter-spacing:-0.020px;">2024</span><span class="t" style="left:1461.80px;top:439.00px;font-size:12.3px;line-height:12.3px;color:#111;letter-spacing:-0.020px;">2025</span><span class="t" style="left:1543.95px;top:439.00px;font-size:12.3px;line-height:12.3px;color:#111;letter-spacing:-0.020px;">2026</span><span class="t" style="left:1626.10px;top:439.00px;font-size:12.3px;line-height:12.3px;color:#111;letter-spacing:-0.020px;">2027</span><span class="t" style="left:1708.25px;top:439.00px;font-size:12.3px;line-height:12.3px;color:#111;letter-spacing:-0.020px;">2028</span><span class="t" style="left:1790.40px;top:439.00px;font-size:12.3px;line-height:12.3px;color:#111;letter-spacing:-0.020px;">2029</span><svg style="left:0;top:520px" width="1000" height="310" viewBox="0 520 1000 310"><path d="M162.5 691.5 H837.5" stroke="#ebebeb" stroke-width="1"/><path d="M162.5 642.5 H837.5" stroke="#ebebeb" stroke-width="1"/><path d="M162.5 593.5 H837.5" stroke="#ebebeb" stroke-width="1"/><path d="M162.5 593.48 V740.6" stroke="#f4f4f4" stroke-width="1"/><path d="M297.5 593.48 V740.6" stroke="#f4f4f4" stroke-width="1"/><path d="M432.5 593.48 V740.6" stroke="#f4f4f4" stroke-width="1"/><path d="M567.5 593.48 V740.6" stroke="#f4f4f4" stroke-width="1"/><path d="M702.5 593.48 V740.6" stroke="#f4f4f4" stroke-width="1"/><path d="M837.5 593.48 V740.6" stroke="#f4f4f4" stroke-width="1"/><path d="M162.50 703.82 H196.70 V662.14 H197.60 V669.49 H217.50 V676.85 H251.70 V679.30 H275.00 V681.75 H285.80 V684.20 H359.30 V676.85 H360.20 V681.75 H390.00 V684.20 H398.30 V686.66 H410.80 V689.11 H432.50 V684.20 H451.70 V686.66 H457.30 V674.40 H470.40 V664.59 H471.30 V667.04 H475.20 V632.71 H478.30 V637.62 H492.50 V640.07 H498.00 V642.52 H500.50 V644.97 H512.50 V647.42 H521.50 V649.88 L548.33 650.00 H548.33 V660.17 H562.50 V660.17 H565.00 V664.67 H567.50 V667.50 H574.17 V667.50 H575.83 V670.00 H579.17 V671.33 H579.67 V681.33 H581.67 V683.83 H584.17 V685.50 H588.33 V688.00 H589.17 V692.17 H593.33 V698.00 H595.83 V699.67 H598.33 V703.33 H604.17 V703.83 H605.33 V711.83 H615.00 V711.83 H615.83 V713.50 H625.50 V713.50 H626.67 V716.33 H630.00 V718.50 H663.67 V718.50 H665.00 V725.83 H696.33 V725.83 H697.00 V731.00 H702.17 V731.00 H702.17 V708.50 H702.83 V708.50 H702.83 V731.00 H742.50 V731.00 H743.33 V733.83 H753.33 V733.83 H754.17 V735.83 H758.33 V736.33 H758.67 V740.50 L758.67 740.6 L162.5 740.6 Z" fill="rgba(46,189,133,0.5)"/><path d="M162.50 703.82 H196.70 V662.14 H197.60 V669.49 H217.50 V676.85 H251.70 V679.30 H275.00 V681.75 H285.80 V684.20 H359.30 V676.85 H360.20 V681.75 H390.00 V684.20 H398.30 V686.66 H410.80 V689.11 H432.50 V684.20 H451.70 V686.66 H457.30 V674.40 H470.40 V664.59 H471.30 V667.04 H475.20 V632.71 H478.30 V637.62 H492.50 V640.07 H498.00 V642.52 H500.50 V644.97 H512.50 V647.42 H521.50 V649.88 L548.33 650.00 H548.33 V660.17 H562.50 V660.17 H565.00 V664.67 H567.50 V667.50 H574.17 V667.50 H575.83 V670.00 H579.17 V671.33 H579.67 V681.33 H581.67 V683.83 H584.17 V685.50 H588.33 V688.00 H589.17 V692.17 H593.33 V698.00 H595.83 V699.67 H598.33 V703.33 H604.17 V703.83 H605.33 V711.83 H615.00 V711.83 H615.83 V713.50 H625.50 V713.50 H626.67 V716.33 H630.00 V718.50 H663.67 V718.50 H665.00 V725.83 H696.33 V725.83 H697.00 V731.00 H702.17 V731.00 H702.17 V708.50 H702.83 V708.50 H702.83 V731.00 H742.50 V731.00 H743.33 V733.83 H753.33 V733.83 H754.17 V735.83 H758.33 V736.33 H758.67 V740.50" fill="none" stroke="#2ebd85" stroke-width="2.1" stroke-linejoin="miter"/><path d="M162.50 698.92 H196.70 V657.23 H197.60 V664.59 H359.50 V657.23 H432.50 V652.33 H457.30 V640.07 H470.40 V630.26 H471.30 V632.71 H475.20 V598.38 H476.20 V603.29 H521.50 V740.60 H702.20 V718.53 H703.00 V740.60 H837.50 V740.60 L837.5 740.6 L162.5 740.6 Z" fill="rgba(251,192,45,0.5)"/><path d="M162.50 698.92 H196.70 V657.23 H197.60 V664.59 H359.50 V657.23 H432.50 V652.33 H457.30 V640.07 H470.40 V630.26 H471.30 V632.71 H475.20 V598.38 H476.20 V603.29 H521.50 V740.60 H702.20 V718.53 H703.00 V740.60 H837.50 V740.60" fill="none" stroke="#fbc02d" stroke-width="2.1" stroke-linejoin="miter"/><path d="M521.5 593.48 V740.6" stroke="#1a1a1a" stroke-width="0.85" stroke-dasharray="2.3 1.9"/><path d="M162.0 740.6 H838.0" stroke="#000" stroke-width="1.3"/><path d="M162.50 740.6 V746.2" stroke="#000" stroke-width="1"/><path d="M297.50 740.6 V746.2" stroke="#000" stroke-width="1"/><path d="M432.50 740.6 V746.2" stroke="#000" stroke-width="1"/><path d="M567.50 740.6 V746.2" stroke="#000" stroke-width="1"/><path d="M702.50 740.6 V746.2" stroke="#000" stroke-width="1"/><path d="M837.50 740.6 V746.2" stroke="#000" stroke-width="1"/><path d="M157.2 740.5 H163.6" stroke="#000" stroke-width="1"/><path d="M157.2 691.5 H163.6" stroke="#000" stroke-width="1"/><path d="M157.2 642.5 H163.6" stroke="#000" stroke-width="1"/><path d="M157.2 593.5 H163.6" stroke="#000" stroke-width="1"/><rect x="162.5" y="771.7" width="675.0" height="40.7" fill="#f0f0f0"/><path d="M297.50 771.7 V812.4" stroke="#ebebeb" stroke-width="1"/><path d="M432.50 771.7 V812.4" stroke="#ebebeb" stroke-width="1"/><path d="M567.50 771.7 V812.4" stroke="#ebebeb" stroke-width="1"/><path d="M702.50 771.7 V812.4" stroke="#ebebeb" stroke-width="1"/><path d="M162.5 804.47 H196.70 V797.84 H197.60 V799.01 H359.50 V797.84 H432.50 V797.06 H457.30 V795.11 H470.40 V793.55 H471.30 V793.94 H475.20 V788.48 H476.20 V789.26 H521.50 V811.10 H702.20 V807.59 H703.00 V811.10 H837.50 V811.10" fill="none" stroke="#8a8a8a" stroke-width="1"/><rect x="102.2" y="594" width="10.6" height="148" fill="#ededed"/><defs><filter id="sh" x="-40%" y="-40%" width="180%" height="190%"><feDropShadow dx="0" dy="1.5" stdDeviation="1.6" flood-color="#000" flood-opacity="0.28"/></filter></defs><circle cx="107.4" cy="593.9" r="15" fill="#fff" filter="url(#sh)"/><path d="M102 592.3 H112.8 M102 595.5 H112.8" stroke="#b5b5b5" stroke-width="1"/><circle cx="107.4" cy="741.8" r="15" fill="#fff" filter="url(#sh)"/><path d="M102 740.1999999999999 H112.8 M102 743.4 H112.8" stroke="#b5b5b5" stroke-width="1"/><circle cx="162.5" cy="791.6" r="15" fill="#fff" filter="url(#sh)"/><path d="M160.8 786.4 V796.6 M164.2 786.4 V796.6" stroke="#9a9a9a" stroke-width="1"/><circle cx="837.5" cy="791.6" r="15" fill="#fff" filter="url(#sh)"/><path d="M835.8 786.4 V796.6 M839.2 786.4 V796.6" stroke="#9a9a9a" stroke-width="1"/><circle cx="939" cy="599" r="17.8" fill="#fff" filter="url(#sh)"/><path d="M936.8 592.4 H941.2 V597 H944.6 L939 602.4 L933.4 597 H936.8 Z" fill="#c2c2c2"/><path d="M933.6 605 H944.4" stroke="#c2c2c2" stroke-width="1.4"/><circle cx="741.6" cy="609.4" r="6.6" fill="none" stroke="#111" stroke-width="1.5"/><path d="M738.4 609.4 H744.8" stroke="#111" stroke-width="1.6"/><path d="M746.4 614.4 L751 619" stroke="#111" stroke-width="1.6" stroke-linecap="round"/></svg><span class="t" style="left:145.00px;top:735.00px;font-size:11px;line-height:11px;color:#000;letter-spacing:0.075px;">0</span><span class="t" style="left:138.80px;top:686.00px;font-size:11px;line-height:11px;color:#000;letter-spacing:0.150px;">20</span><span class="t" style="left:138.80px;top:637.00px;font-size:11px;line-height:11px;color:#000;letter-spacing:0.150px;">40</span><span class="t" style="left:138.80px;top:588.00px;font-size:11px;line-height:11px;color:#000;letter-spacing:0.150px;">60</span><span class="t" style="left:217.50px;top:750.00px;font-size:11px;line-height:11px;color:#000;letter-spacing:-0.028px;-webkit-text-stroke:0.12px #000;">2023</span><span class="t" style="left:217.50px;top:797.00px;font-size:11px;line-height:11px;color:#b4b4b4;letter-spacing:-0.028px;">2023</span><span class="t" style="left:352.50px;top:750.00px;font-size:11px;line-height:11px;color:#000;letter-spacing:-0.028px;-webkit-text-stroke:0.12px #000;">2024</span><span class="t" style="left:352.50px;top:797.00px;font-size:11px;line-height:11px;color:#b4b4b4;letter-spacing:-0.028px;">2024</span><span class="t" style="left:487.50px;top:750.00px;font-size:11px;line-height:11px;color:#000;letter-spacing:-0.028px;-webkit-text-stroke:0.12px #000;">2025</span><span class="t" style="left:487.50px;top:797.00px;font-size:11px;line-height:11px;color:#b4b4b4;letter-spacing:-0.028px;">2025</span><span class="t" style="left:622.50px;top:750.00px;font-size:11px;line-height:11px;color:#000;letter-spacing:-0.028px;-webkit-text-stroke:0.12px #000;">2026</span><span class="t" style="left:622.50px;top:797.00px;font-size:11px;line-height:11px;color:#b4b4b4;letter-spacing:-0.028px;">2026</span><span class="t" style="left:757.50px;top:750.00px;font-size:11px;line-height:11px;color:#000;letter-spacing:-0.028px;-webkit-text-stroke:0.12px #000;">2027</span><span class="t" style="left:757.50px;top:797.00px;font-size:11px;line-height:11px;color:#b4b4b4;letter-spacing:-0.028px;">2027</span><span class="t" style="left:757.00px;top:605.00px;font-size:11.5px;line-height:11.5px;color:#000;letter-spacing:-0.155px;">Alle anzeigen</span><span class="t" style="left:517.20px;top:617.15px;font-size:11.4px;line-height:11.4px;color:#222;transform-origin:0 9.65px;transform:rotate(-90deg);">Heute</span><svg style="left:980px;top:520px" width="900" height="310" viewBox="980 520 900 310"><path d="M1051.8 597.2 H1791.7" stroke="#d2d2d2" stroke-width="1"/><path d="M1051.8 658.3 H1791.7" stroke="#d2d2d2" stroke-width="1"/><path d="M1051.8 718.3 H1791.7" stroke="#d2d2d2" stroke-width="1"/><path d="M1051.8 778.3 H1791.7" stroke="#d2d2d2" stroke-width="1"/><path d="M1174.4 588.2 V778.3" stroke="#c4c4c4" stroke-width="1"/><path d="M1421.6 588.2 V778.3" stroke="#c4c4c4" stroke-width="1"/><path d="M1667.6 588.2 V778.3" stroke="#c4c4c4" stroke-width="1"/><path d="M1379.5 588.2 V778.3" stroke="#222" stroke-width="1" stroke-dasharray="5 1.5"/><path d="M1051.80 739.20 L1299.00 739.20 L1331.80 723.40 L1379.50 701.80 L1379.50 778.3 L1051.80 778.3 Z" fill="rgba(46,189,133,0.58)"/><path d="M1051.80 739.20 L1299.00 739.20 L1331.80 723.40 L1379.50 701.80" fill="none" stroke="#2ebd85" stroke-width="1.8"/><path d="M1299.00 778.30 L1329.60 729.40 L1360.30 679.80 L1391.10 631.80 L1421.60 588.20 L1791.70 588.20 L1791.70 778.3 L1299.00 778.3 Z" fill="rgba(109,217,146,0.5)"/><path d="M1299.00 778.30 L1329.60 729.40 L1360.30 679.80 L1391.10 631.80 L1421.60 588.20 L1791.70 588.20" fill="none" stroke="rgba(90,205,130,0.75)" stroke-width="1.4"/><path d="M1051.80 778.30 L1174.40 757.90 L1298.90 751.70 L1421.60 636.80 L1545.30 591.40 L1667.60 588.60 L1791.70 588.20 L1791.70 778.3 L1051.80 778.3 Z" fill="rgba(255,213,106,0.6)"/><path d="M1051.80 778.30 L1174.40 757.90 L1298.90 751.70 L1421.60 636.80 L1545.30 591.40 L1667.60 588.60 L1791.70 588.20" fill="none" stroke="#ffd56a" stroke-width="1.8"/><path d="M1051.80 770.60 L1174.40 767.90 L1298.90 763.90 L1379.50 761.10 L1379.50 778.3 L1051.80 778.3 Z" fill="rgba(251,192,45,0.65)"/><path d="M1051.80 770.60 L1174.40 767.90 L1298.90 763.90 L1379.50 761.10" fill="none" stroke="#fbc02d" stroke-width="1.8"/><path d="M1051.8 778.3 H1791.7" stroke="rgba(120,110,40,0.55)" stroke-width="1"/></svg><span class="t" style="left:1008.70px;top:582.00px;font-size:12.3px;line-height:12.3px;color:#111;letter-spacing:-0.444px;">100 %</span><span class="t" style="left:1015.30px;top:620.00px;font-size:12.3px;line-height:12.3px;color:#111;letter-spacing:-0.510px;">80 %</span><span class="t" style="left:1015.30px;top:658.00px;font-size:12.3px;line-height:12.3px;color:#111;letter-spacing:-0.510px;">60 %</span><span class="t" style="left:1015.30px;top:697.00px;font-size:12.3px;line-height:12.3px;color:#111;letter-spacing:-0.510px;">40 %</span><span class="t" style="left:1015.30px;top:735.00px;font-size:12.3px;line-height:12.3px;color:#111;letter-spacing:-0.510px;">20 %</span><span class="t" style="left:1022.20px;top:773.00px;font-size:12.3px;line-height:12.3px;color:#111;letter-spacing:-0.802px;">0 %</span><span class="t" style="left:1802.20px;top:592.00px;font-size:12.3px;line-height:12.3px;color:#111;letter-spacing:-0.387px;">1.500 PT</span><span class="t" style="left:1802.20px;top:653.00px;font-size:12.3px;line-height:12.3px;color:#111;letter-spacing:-0.387px;">1.000 PT</span><span class="t" style="left:1802.20px;top:713.00px;font-size:12.3px;line-height:12.3px;color:#111;letter-spacing:-0.531px;">500 PT</span><span class="t" style="left:1802.20px;top:773.00px;font-size:12.3px;line-height:12.3px;color:#111;letter-spacing:-0.828px;">0 PT</span><span class="t" style="left:1160.90px;top:791.00px;font-size:12.3px;line-height:12.3px;color:#111;letter-spacing:-0.120px;">2024</span><span class="t" style="left:1408.10px;top:791.00px;font-size:12.3px;line-height:12.3px;color:#111;letter-spacing:-0.120px;">2026</span><span class="t" style="left:1654.10px;top:791.00px;font-size:12.3px;line-height:12.3px;color:#111;letter-spacing:-0.120px;">2028</span><svg style="left:0;top:840px" width="980" height="376" viewBox="0 840 980 376"><rect x="161" y="904" width="261.0" height="82.8" rx="4" fill="#ebb838"/><rect x="424.5" y="904" width="260.7" height="82.8" rx="4" fill="#f68c41"/><rect x="688" y="904" width="261.0" height="82.8" rx="4" fill="#ee5845"/><rect x="161" y="989" width="261.0" height="83.0" rx="4" fill="#aed13d"/><rect x="424.5" y="989" width="260.7" height="83.0" rx="4" fill="#edd340"/><rect x="688" y="989" width="261.0" height="83.0" rx="4" fill="#f68c41"/><rect x="161" y="1073.9" width="261.0" height="82.8" rx="4" fill="#52a337"/><rect x="424.5" y="1073.9" width="260.7" height="82.8" rx="4" fill="#aed13d"/><rect x="688" y="1073.9" width="261.0" height="82.8" rx="4" fill="#ebb838"/><circle cx="291.4" cy="1030.3" r="20.6" fill="#586b1f"/><circle cx="291.4" cy="1115.4" r="15" fill="#27571c"/><circle cx="554.7" cy="1030.3" r="15" fill="#776a1f"/><circle cx="818.2" cy="1030.3" r="40.8" fill="#7b4620"/><circle cx="818.2" cy="1115.4" r="15" fill="#775c1c"/></svg><span class="t" style="left:288.62px;top:1026.00px;font-size:10px;line-height:10px;color:#fff;font-weight:700;">4</span><span class="t" style="left:288.62px;top:1111.00px;font-size:10px;line-height:10px;color:#fff;font-weight:700;">2</span><span class="t" style="left:551.92px;top:1026.00px;font-size:10px;line-height:10px;color:#fff;font-weight:700;">2</span><span class="t" style="left:812.91px;top:1026.00px;font-size:10px;line-height:10px;color:#fff;font-weight:700;">11</span><span class="t" style="left:815.42px;top:1111.00px;font-size:10px;line-height:10px;color:#fff;font-weight:700;">2</span><span class="t" style="left:122.60px;top:938.00px;font-size:12.3px;line-height:12.3px;color:#111;letter-spacing:-0.024px;">hoch</span><span class="t" style="left:117.50px;top:1024.00px;font-size:12.3px;line-height:12.3px;color:#111;letter-spacing:0.462px;">mittel</span><span class="t" style="left:113.20px;top:1109.00px;font-size:12.3px;line-height:12.3px;color:#111;letter-spacing:0.183px;">gering</span><span class="t" style="left:273.25px;top:1170.00px;font-size:12.3px;line-height:12.3px;color:#111;letter-spacing:0.142px;">gering</span><span class="t" style="left:538.85px;top:1170.00px;font-size:12.3px;line-height:12.3px;color:#111;letter-spacing:0.422px;">mittel</span><span class="t" style="left:804.80px;top:1170.00px;font-size:12.3px;line-height:12.3px;color:#111;letter-spacing:0.043px;">hoch</span><span class="t" style="left:514.75px;top:1197.00px;font-size:12.3px;line-height:12.3px;color:#111;letter-spacing:0.150px;">Auswirkungen</span><span class="t" style="left:100.10px;top:1073.33px;font-size:12.6px;line-height:12.6px;color:#111;letter-spacing:-0.014px;transform-origin:0 10.67px;transform:rotate(-90deg);">Wahrscheinlichkeit</span><svg style="left:980px;top:840px" width="900" height="376" viewBox="980 840 900 376"><rect x="1160" y="897.60" width="690.00" height="20.7" fill="#2ebd80"/><rect x="1160" y="937.70" width="690.00" height="20.7" fill="#ffd670"/><rect x="1160" y="977.80" width="414.70" height="20.7" fill="#ffd670"/><rect x="1574.7" y="977.80" width="275.30" height="20.7" fill="#2ebd80"/><rect x="1160" y="1017.90" width="604.80" height="20.7" fill="#ffd670"/><rect x="1764.8" y="1017.90" width="85.20" height="20.7" fill="#2ebd80"/><rect x="1160" y="1058.00" width="316.00" height="20.7" fill="#ffd670"/><rect x="1476" y="1058.00" width="255.80" height="20.7" fill="#2ebd80"/><rect x="1731.8" y="1058.00" width="60.00" height="20.7" fill="#90dcf9"/><rect x="1791.8" y="1058.00" width="19.40" height="20.7" fill="#3ec1c1"/><rect x="1811.2" y="1058.00" width="38.80" height="20.7" fill="#aaeeea"/><rect x="1160" y="1098.10" width="690.00" height="20.7" fill="#ffd670"/><rect x="1160" y="1138.20" width="690.00" height="20.7" fill="#90dcf9"/><rect x="1160" y="1178.30" width="552.80" height="20.7" fill="#ffd670"/><rect x="1712.8" y="1178.30" width="137.20" height="20.7" fill="#2ebd80"/><path d="M1863 899.2 L1867.5 894.2 L1872 899.2 Z" fill="#b9b9b9"/><rect x="1863.2" y="905.9" width="8.6" height="121" rx="4.3" fill="#c1c1c1"/></svg><span class="t" style="left:1071.90px;top:902.00px;font-size:12.3px;line-height:12.3px;color:#111;letter-spacing:0.164px;">Aufgabenliste</span><span class="t" style="left:1076.90px;top:942.00px;font-size:12.3px;line-height:12.3px;color:#111;letter-spacing:0.041px;">Abnahme (3)</span><span class="t" style="left:1017.40px;top:982.00px;font-size:12.3px;line-height:12.3px;color:#111;letter-spacing:-0.060px;">DSG-VO Konformität (3)</span><span class="t" style="left:1040.50px;top:1022.00px;font-size:12.3px;line-height:12.3px;color:#111;letter-spacing:0.247px;">Objektfortschritt (3)</span><span class="t" style="left:1052.50px;top:1062.00px;font-size:12.3px;line-height:12.3px;color:#111;letter-spacing:0.041px;">Offene Punkte (3)</span><span class="t" style="left:1046.50px;top:1102.00px;font-size:12.3px;line-height:12.3px;color:#111;letter-spacing:-0.059px;">Risiko-Handling (2)</span><span class="t" style="left:1076.90px;top:1143.00px;font-size:12.3px;line-height:12.3px;color:#111;letter-spacing:0.041px;">Abnahme (2)</span><span class="t" style="left:1017.40px;top:1183.00px;font-size:12.3px;line-height:12.3px;color:#111;letter-spacing:-0.060px;">DSG-VO Konformität (2)</span><div class="abs" style="left:1774px;top:854px;width:59px;height:28px;border:1px solid #dcdfe3;border-radius:3px;background:#fff"></div><span class="t" style="left:1783.20px;top:862.00px;font-size:12px;line-height:12px;color:#555b62;letter-spacing:-0.115px;">Kanban</span><div class="abs" style="left:1903px;top:106px;width:2px;height:569px;background:#a9a9a9;border-radius:1px"></div><div class="abs" style="left:1904px;top:830px;width:1px;height:383px;background:#fcfcfd"></div><div class="abs" style="left:1902.8px;top:830px;width:1.3px;height:347.6px;background:#b2b2b2"></div><div class="abs" style="left:1903px;top:1201px;width:1px;height:1px;background:#aaa"></div><svg style="left:1899px;top:94px" width="6" height="6"><path d="M2 4.6 L5.4 1.6 V4.6 Z" fill="#8a8a8a"/></svg><div class="abs" style="left:1883px;top:437px;width:22px;height:28px;background:#0a67d3;border-radius:3px 0 0 3px"></div><div class="abs" style="left:1883px;top:469px;width:22px;height:28px;background:#0a67d3;border-radius:3px 0 0 3px"></div><div class="abs" style="left:1883px;top:501px;width:22px;height:28px;background:#0a67d3;border-radius:3px 0 0 3px"></div><svg style="left:1883px;top:437px" width="22" height="92"><path d="M5.6 7.6 H22 V9 L17.6 14.2 V21.4 L13.6 19 V14.2 L5.6 7.6 Z" fill="#fff"/><g transform="translate(14.6 46.2)"><circle r="5.4" fill="none" stroke="#fff" stroke-width="2.6"/><rect x="-1.5" y="-9" width="3" height="3.4" fill="#fff" transform="rotate(0)"/><rect x="-1.5" y="-9" width="3" height="3.4" fill="#fff" transform="rotate(45)"/><rect x="-1.5" y="-9" width="3" height="3.4" fill="#fff" transform="rotate(90)"/><rect x="-1.5" y="-9" width="3" height="3.4" fill="#fff" transform="rotate(135)"/><rect x="-1.5" y="-9" width="3" height="3.4" fill="#fff" transform="rotate(180)"/><rect x="-1.5" y="-9" width="3" height="3.4" fill="#fff" transform="rotate(225)"/><rect x="-1.5" y="-9" width="3" height="3.4" fill="#fff" transform="rotate(270)"/><rect x="-1.5" y="-9" width="3" height="3.4" fill="#fff" transform="rotate(315)"/></g><rect x="6.6" y="71.6" width="18" height="14.4" rx="1.5" fill="none" stroke="#fff" stroke-width="1.5"/><path d="M18.6 72 V86" stroke="#fff" stroke-width="1.5"/><path d="M14.4 75.4 L11 78.8 L14.4 82.2" fill="none" stroke="#fff" stroke-width="1.5"/></svg></div></body></html>
